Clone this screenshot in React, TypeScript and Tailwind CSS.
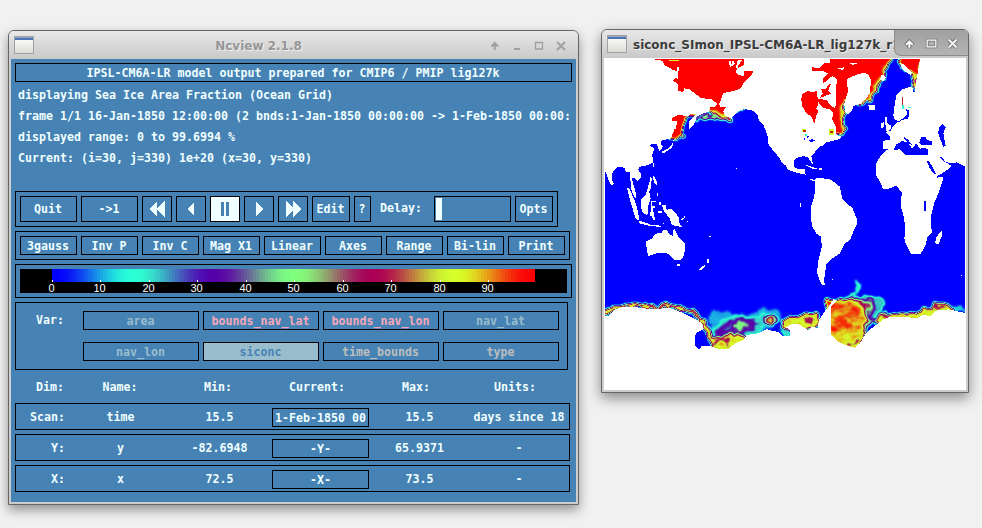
import React from "react";

const MONO =
  "font-['DejaVu_Sans_Mono','Liberation_Mono',monospace] font-bold text-[11.63px] whitespace-pre text-[#f0ffff]";

function Btn({ label, className = "" }: { label: React.ReactNode; className?: string }) {
  return (
    <div className={`flex shrink-0 items-center justify-center overflow-hidden border border-black leading-[17px] ${className}`}>
      {label}
    </div>
  );
}

function WindowIcon() {
  return (
    <div className="h-[18px] w-5 shrink-0 border border-[#a0a0a0] bg-linear-to-b from-white to-[#dcdcd6]">
      <div className="h-[3px] border-t border-[#9aa7bf] bg-[#4a76b8]" />
    </div>
  );
}

function Arrows({ d }: { d: string }) {
  return (
    <svg width="28" height="24" viewBox="0 0 28 24" shapeRendering="crispEdges">
      <path d={d} fill="currentColor" />
    </svg>
  );
}

const BANDS = Array.from({ length: 161 }, (_, i) => {
  const t = i / 160;
  const g = Math.round((255 * (1 - Math.cos(6 * Math.PI * t))) / 2);
  return `rgb(${Math.round(255 * t)},${g},${Math.round(255 * (1 - t))})`;
});

function ColorBar() {
  return (
    <svg width="547" height="24" viewBox="20 269 547 24" className="block bg-black" shapeRendering="crispEdges">
      {BANDS.map((c, i) => (
        <rect key={i} x={52 + i * 3} y="269" width="3" height="13" fill={c} />
      ))}
      {[52, 100, 149, 197, 246, 294, 343, 391, 440, 488].map((x, i) => (
        <g key={x} fill="white">
          <rect x={x} y="280" width="1" height="2" />
          <text x={x - 0.5} y="292" textAnchor="middle" className="font-['Liberation_Sans',Arial,sans-serif] text-[11px] font-normal">
            {i * 10}
          </text>
        </g>
      ))}
    </svg>
  );
}

function NcviewWindow() {
  return (
    <div className="absolute left-2 top-[30px] flex h-[475px] w-[571px] flex-col rounded-t-[6px] border border-[#666] bg-[#cdcdcd] px-[2px] pb-[2px] shadow-[0_5px_12px_rgba(0,0,0,0.4)]">
      <div className="-mx-[2px] flex h-7 shrink-0 items-center rounded-t-[5px] bg-linear-to-b from-[#e8e8e8] to-[#c9c9c9] pl-[5px] pr-[10px]">
        <WindowIcon />
        <div className="flex-1 pr-[3px] pt-px text-center font-['DejaVu_Sans',sans-serif] text-[12px] font-bold text-[#969696] [text-shadow:1px_1px_0_#eee]">
          Ncview 2.1.8
        </div>
        <svg width="82" height="20" viewBox="486 34 82 20" fill="none" stroke="#a0a0a0" strokeWidth="2">
          <path d="M494.800 49v-7M491.500 45.500l3.300-3.500 3.300 3.500" />
          <path d="M514 48h6" />
          <path d="M535.500 41.500h7v6.500h-7z" strokeWidth="1.300" />
          <path d="M557 41l8 8M565 41l-8 8" />
        </svg>
      </div>
      <div className={`flex flex-1 flex-col overflow-hidden bg-[#4682b4] pl-1 pt-1 ${MONO}`}>
        <Btn className="h-[19px] w-[557px] pr-px pt-[2px]" label="IPSL-CM6A-LR model output prepared for CMIP6 / PMIP lig127k" />
        <div className="mt-[3px] w-[557px] shrink-0 overflow-hidden pl-[3px] leading-[21px]">
          <div>displaying Sea Ice Area Fraction (Ocean Grid)</div>
          <div>frame 1/1 16-Jan-1850 12:00:00 (2 bnds:1-Jan-1850 00:00:00 -&gt; 1-Feb-1850 00:00:</div>
          <div>displayed range: 0 to 99.6994 %</div>
          <div>Current: (i=30, j=330) 1e+20 (x=30, y=330)</div>
        </div>
        <div className="mt-[22px] flex h-9 w-[543px] shrink-0 gap-1 border border-black p-1">
          <Btn className="w-[57px] pr-px" label="Quit" />
          <Btn className="w-[57px] pr-px" label="->1" />
          <Btn className="w-[30px]" label={<Arrows d="M6 12 14 4v7L22 4v16L14 13v7z" />} />
          <Btn className="w-[30px]" label={<Arrows d="M10 12 17 5v14z" />} />
          <Btn className="w-[30px] bg-[#f0ffff] text-[#4682b4]" label={<Arrows d="M10 5h3v14h-3zM15 5h3v14h-3z" />} />
          <Btn className="w-[30px]" label={<Arrows d="M18 12 11 5v14z" />} />
          <Btn className="w-[30px]" label={<Arrows d="M22 12 14 4v7L7 4v16L14 13v7z" />} />
          <Btn className="w-[38px] pr-px" label="Edit" />
          <Btn className="w-[17px] pr-px" label="?" />
          <div className="w-[55px] pr-[3px] text-center leading-6">Delay:</div>
          <div className="w-[77px] border border-black p-px">
            <div className="h-[22px] w-[6px] bg-[#f0ffff]" />
          </div>
          <Btn className="w-[38px] pr-px" label="Opts" />
        </div>
        <div className="mt-1 flex h-[29px] w-[555px] shrink-0 gap-1 border border-black p-1">
          {["3gauss", "Inv P", "Inv C", "Mag X1", "Linear", "Axes", "Range", "Bi-lin", "Print"].map((t) => (
            <Btn key={t} className="w-[57px] pr-px pt-[2px]" label={t} />
          ))}
        </div>
        <div className="mt-1 h-[34px] w-[557px] shrink-0 border border-black p-1">
          <ColorBar />
        </div>
        <div className="mt-1 flex h-[68px] w-[553px] shrink-0 border border-black pt-2">
          <div className="w-[67px] pl-[20px] pt-px leading-[17px]">Var:</div>
          <div className="grid h-[50px] grid-cols-[116px_116px_116px_116px] content-between gap-x-1">
            <Btn className="h-[19px] pr-px pt-[2px] text-[#9abdcd]" label="area" />
            <Btn className="h-[19px] pr-px pt-[2px] text-[#f7a8b8]" label="bounds_nav_lat" />
            <Btn className="h-[19px] pr-px pt-[2px] text-[#f7a8b8]" label="bounds_nav_lon" />
            <Btn className="h-[19px] pr-px pt-[2px] text-[#9abdcd]" label="nav_lat" />
            <Btn className="h-[19px] pr-px pt-[2px] text-[#9abdcd]" label="nav_lon" />
            <Btn className="h-[19px] bg-[#9abdcd] pr-px pt-[2px] text-[#4682b4]" label="siconc" />
            <Btn className="h-[19px] pr-px pt-[2px] text-[#bebebe]" label="time_bounds" />
            <Btn className="h-[19px] pr-px pt-[2px] text-[#bebebe]" label="type" />
          </div>
        </div>
        <div className="flex h-[33px] w-[557px] shrink-0 items-center pt-[2px] text-center">
          <div className="w-[70px]">Dim:</div>
          <div className="w-[70px]">Name:</div>
          <div className="w-[126px]">Min:</div>
          <div className="w-[72px]">Current:</div>
          <div className="w-[126px]">Max:</div>
          <div className="w-[72px]">Units:</div>
        </div>
        <div className="flex flex-col gap-1">
          {[
            ["Scan:", "time", "15.5", "1-Feb-1850 00", "15.5", "days since 18"],
            ["Y:", "y", "-82.6948", "-Y-", "65.9371", "-"],
            ["X:", "x", "72.5", "-X-", "73.5", "-"],
          ].map((r) => (
            <div key={r[0]} className="flex h-[27px] w-[555px] items-center border border-black text-center leading-[23px]">
              <div className="w-[49px] pt-[2px] text-right">{r[0]}</div>
              <div className="w-[111px] pt-[2px]">{r[1]}</div>
              <div className="w-[87px] pt-[2px]">{r[2]}</div>
              <Btn className="ml-[9px] mt-px h-[19px] w-[97px] pt-[2px]" label={r[3]} />
              <div className="w-[101px] pt-[2px]">{r[4]}</div>
              <div className="w-[98px] pt-[2px]">{r[5]}</div>
            </div>
          ))}
        </div>
      </div>
    </div>
  );
}

/* Ice concentration is painted in grey, softened, then run through the 3gauss colour map. */
function IceFilter({ id, k1, k2, blur }: { id: string; k1: number; k2: number; blur: number }) {
  return (
    <filter id={id} filterUnits="userSpaceOnUse" x="0" y="90" width="1150" height="1050" colorInterpolationFilters="sRGB">
      <feTurbulence type="fractalNoise" baseFrequency="0.045" numOctaves="3" seed="4" result="n" />
      <feDisplacementMap in="SourceGraphic" in2="n" scale="26" xChannelSelector="R" yChannelSelector="G" result="d" />
      <feGaussianBlur in="d" stdDeviation={blur} result="b" />
      <feTurbulence type="fractalNoise" baseFrequency="0.03 0.045" numOctaves="3" seed="9" />
      <feColorMatrix values="1 0 0 0 0  1 0 0 0 0  1 0 0 0 0  0 0 0 0 1" result="m" />
      <feComposite in="b" in2="m" operator="arithmetic" k1={k1} k2={k2} k3="0" k4="0" />
      <feColorMatrix values="1 0 0 0 0  0 1 0 0 0  0 0 1 0 0  0 0 0 0 1" />
      <feComponentTransfer>
        <feFuncR type="table" tableValues="0 1" />
        <feFuncG type="table" tableValues="0 .25 .75 1 .75 .25 0 .25 .75 1 .75 .25 0 .25 .75 1 .75 .25 0" />
        <feFuncB type="table" tableValues="1 0" />
      </feComponentTransfer>
    </filter>
  );
}

function SeaIceMap() {
  const grey = (t: number) => {
    const v = Math.round(t * 255);
    return `rgb(${v},${v},${v})`;
  };
  return (
    <svg width="360" height="331" viewBox="30 117 1080 993" className="block overflow-hidden" shapeRendering="crispEdges">
      <defs>
        <IceFilter id="north" k1={0} k2={1} blur={3.2} />
        <IceFilter id="south" k1={0.2} k2={0.9} blur={3.6} />
        <clipPath id="southHalf">
          <rect x="0" y="600" width="1150" height="540" />
        </clipPath>
      </defs>
      <g filter="url(#north)">
        <rect x="-40" y="40" width="1240" height="1140" fill="black" />
        {/* Arctic, Bering and Okhotsk */}
        <path fill="white" d="M150 60H500V250L400 280 370 282 340 275 300 284 278 290 266 310 262 355 238 360 215 352V280L240 250 150 200z" />
        <path fill="none" stroke={grey(0.5)} strokeWidth="9" d="M300 298 345 288 375 294 412 300" />
        <path fill="none" stroke={grey(0.85)} strokeWidth="12" d="M350 276 375 284 408 292" />
        {/* Baffin bay, Fram strait and Barents */}
        <path fill="white" d="M640 60H895L885 125 872 145 865 172 850 178 838 212 822 240 800 252 770 250 755 240 742 255 742 290 752 320 745 340 700 345 690 250 640 200z" />
        <path fill="none" stroke={grey(0.86)} strokeWidth="10" d="M740 255 742 295 748 325 740 345M880 130 868 150 862 175 846 190 836 215 818 245" />
        <path fill="white" d="M915 60H975V160L956 180 950 160 930 150 915 130z" />
        <path fill="none" stroke={grey(0.85)} strokeWidth="14" d="M962 155V212" />
      </g>
      <g clipPath="url(#southHalf)">
        <g filter="url(#south)">
          <rect x="-40" y="40" width="1240" height="1140" fill="black" />
          {/* Amundsen and Ross sector */}
          <path fill="none" stroke={grey(0.87)} strokeWidth="13" strokeLinejoin="round" d="M20 885 58 864 100 857 150 859 190 864 212 854 235 862 275 870 310 893 335 925 348 960 356 985" />
          <path fill={grey(0.1)} d="M335 885 370 872 430 882 480 876 510 862 550 872 564 900 530 920 480 952 360 968z" />
          <path fill={grey(0.2)} d="M350 935 390 896 430 884 475 896 510 880 520 905 485 945 430 948 360 960z" />
          <path fill={grey(0.34)} d="M362 936 400 902 440 892 490 908 475 930 430 945 370 950z" />
          <path fill={grey(0.22)} d="M385 930 415 908 440 900 425 925z" />
          <path fill={grey(0.5)} d="M412 925 430 902 462 912 435 930z" />
          <path fill={grey(0.84)} d="M340 955 430 943 455 950 450 1010H350z" />
          <path fill="none" stroke={grey(0.66)} strokeWidth="9" d="M352 968 400 958 395 980" />
          <ellipse cx="530" cy="899" rx="20" ry="18" fill={grey(0.45)} />
          <ellipse cx="530" cy="899" rx="11" ry="11" fill={grey(0.75)} />
          <path fill={grey(0.85)} d="M565 907 582 895 620 885 664 876 674 890 667 920 630 930 570 932z" />
          <path fill={grey(0.66)} d="M618 898 656 888 655 908 630 912z" />
          <path fill={grey(0.2)} d="M555 930 590 925 580 965 560 955z" />
          {/* Weddell sea */}
          <path fill="none" stroke={grey(0.22)} strokeWidth="8" d="M730 840 765 832 785 815 793 795 782 782" />
          <path fill={grey(0.22)} d="M760 830 800 828 850 834 870 842 860 865 840 890 828 915 812 905 790 850z" />
          <path fill={grey(0.4)} d="M775 836 810 834 838 844 834 868 822 892 810 880 795 848z" />
          <path fill={grey(0.68)} d="M762 838 800 840 826 850 820 876 806 872 790 852z" />
          <path fill={grey(0.86)} d="M690 838 780 842 806 860 816 882 820 920 805 955 785 1000 690 990z" />
          <path fill={grey(0.9)} d="M690 842 770 846 800 870 806 905 785 940 740 955 690 950z" />
          <path fill={grey(0.935)} d="M690 845 755 848 785 872 788 900 765 918 730 925 690 935z" />
          <path fill="none" stroke={grey(0.68)} strokeWidth="8" d="M755 972 770 975 795 958" />
          <path fill="none" stroke={grey(0.5)} strokeWidth="12" d="M812 930 822 905 838 898" />
          {/* East Antarctic fringe */}
          <path fill={grey(0.85)} d="M838 906 850 888 872 878 892 884 930 882 970 872 1010 864 1022 848 1050 850 1085 864 1080 880 1000 895 850 912z" />
          <path fill="none" stroke={grey(0.67)} strokeWidth="7" d="M852 892 882 882M1020 860 1060 862" />
          <path fill="none" stroke={grey(0.13)} strokeWidth="10" d="M1070 862 1120 876" />
        </g>
      </g>
      <g fill="white">
        {/* Asia with its Arctic, Okhotsk and Indian Ocean coasts */}
        <path d="M27 114H178L180 119 203 122 207 135 235 150 246 154 246 172 232 182 250 192 250 212 265 216 268 205 283 208 318 234 350 238 367 252 358 262 345 262 343 274 320 282 304 290 304 300 290 322 283 326 282 304 305 282 285 282 280 290 250 284 230 295 232 302 245 304 244 325 238 328 228 355 200 362 198 372 204 380 193 394 188 380 186 372 168 372 166 378 178 384 172 405 174 428 160 435 135 440 129 449 138 462 137 472 127 483 118 472 110 474 123 520 122 536 110 515 104 457 93 457 90 446 82 440 70 440 53 454 50 478 56 490 55 496 50 497 43 486 33 457 27 456z" />
        {/* Japan, Taiwan and the Philippines */}
        <path d="M236 360 232 382 220 390 203 402 202 394 218 386 230 375zM173 428h3v14h-3zM174 465 182 478 188 492 186 498 176 484zM165 470 172 475 165 500z" />
        {/* Indonesia and New Guinea */}
        <path d="M95 502 103 507 120 542 130 580 132 600 122 597 108 550zM130 602 150 607 170 615 185 615 200 618 198 621 165 618 135 611zM165 480 169 500 163 515 167 535 160 558 157 586 140 576 138 538 150 528 158 505zM168 542h14v4h-10v12h8v6h-7l7 36h-4l-6-12h-4zM192 545h5v9h-5zM189 574h13v4h-13zM201 556 212 554 215 570 229 566 242 578 252 594 252 608 262 623 250 619 230 615 224 595 206 573zM259 598l10-8v5l-9 8zM266 587h4v5h-4zM186 520h4v8h-4zM277 603h3v3h-3zM205 609h3v3h-3z" />
        {/* Australia, Tasmania and New Zealand */}
        <path d="M153 664 175 654 176 645 190 638 201 638 202 632 216 630 222 641 234 648 236 624 243 634 250 650 269 670 270 692 264 714 255 720H238L230 710 215 699H188L160 708 156 695zM246 732h9v6h-9zM336 717h6v12h-6zM312 748 320 740 333 733 330 740 318 752zM342 648h6v3h-6zM423 444h3v3h-3z" />
        {/* North and Central America */}
        <path d="M447 117 446 135 428 144 421 157 432 165 446 168 447 154 475 153 473 160 462 172 448 186 438 204 420 212 384 219 378 240 372 254 378 262 392 262 385 275 391 288 410 296 418 284 433 272 450 267 474 272 488 287 492 302 506 317 517 344 520 372 535 392 552 412 560 428 572 436 580 450 600 457 632 464 645 480 660 485 659 480 652 478 640 475 630 460V447L620 446 610 447 600 442 598 422 604 414 625 408 640 413 650 430 654 432 649 410 660 396 675 380 686 376 690 368 735 357 738 350 725 345 722 320 712 300 714 270 724 255 722 215 726 180 718 160 708 155V117z" />
        {/* South America */}
        <path d="M660 476 675 474 705 478 718 487 735 500 741 535 755 550 772 563 785 595V613L775 635 766 658 748 672 735 700 712 715 694 732 690 760 687 785 690 794H680L674 780 667 760 668 732 680 682 679 650 665 642 652 620 648 595V560L658 530 660 500z" />
        {/* Greenland, Iceland and Svalbard */}
        <path d="M755 178 775 168 788 163 810 158 820 165 828 178 825 218 815 235 795 252 775 258 772 270 760 284 750 275 748 250 759 215zM820 256h19v13h-16zM857 167l7-3 8 8-6 12-10-4zM915 130l10 2 25 25-4 8-22-15z" />
        {/* British isles */}
        <path d="M869 291 877 291 877 310 890 318 886 330 872 334 872 318zM858 310 868 305 867 322 857 324z" />
        {/* Caribbean and southern islets */}
        <path d="M630 434 650 440 668 446 660 449 635 438zM672 443h9v6h-9zM615 549h3v12h-3zM711 777h3v3h-3z" />
        {/* Europe, Africa and western Asia */}
        <path d="M975 117H1113V439L1095 433 1085 427 1066 430 1050 425 1040 410 1035 413 1049 425 1071 438 1050 455 1026 468 1027 473 1043 470 1043 482 1030 520 1017 550 1008 590 1010 638 997 652 990 680 976 702H948L930 665 928 655 931 640 928 598 918 560 920 518 905 498 896 500 880 507 864 508 855 485 842 465V432L858 405 873 390 895 390 925 387 928 400 940 406 950 402 962 406 998 406 998 390 990 384 974 386 964 370 958 378 952 386 935 368 922 366 905 372 895 390 865 387 864 362 884 360V350L870 335 885 334 895 318 905 308 924 302 918 306 900 300 895 285 898 262 904 225 918 210 940 202 952 200 955 215H961V200z" />
        <path d="M1030 644 1041 632 1040 650 1030 674 1021 670 1022 654z" />
        <path d="M1099 765h3v3h-3z" />
        {/* Antarctica */}
        <path d="M27 885 38 889 60 868 80 862 125 862 155 866 195 866 225 864 260 877 290 892 320 908 326 928 305 938 300 960 303 976 312 989 320 978 346 978 370 987H400L420 970 445 960 455 945 490 940 515 927 530 932 552 936 563 948H585L585 930 572 922 590 912 610 912 640 930 652 920 668 925 672 900 685 880 708 850 715 838 725 842 708 858V945L730 965 750 975 778 983 795 970 810 945 825 928 845 914 862 900 885 890 940 892 962 895 985 885 1005 888 1022 872 1060 868 1080 872 1113 880V1113H27z" />
      </g>
      <g fill="blue">
        {/* Inland and marginal seas */}
        <path d="M300 975 300 945 320 930 334 948 340 976 320 978 312 988z" />
        <path d="M973 368 978 352 990 350 996 360 1012 364 1010 374 980 376zM1031 325 1042 312 1052 322 1045 340 1052 378 1045 380 1035 355 1030 340zM994 420 1004 426 1024 462 1018 463 1004 444zM987 543h5v29h-5z" />
        <path d="M905 375 920 362 940 368 954 390 967 380 972 393 998 388V405H930z" />
        <path d="M926 350 940 360 950 374 944 372 930 360zM927 292 936 285 934 268 943 270 940 295 915 302zM597 427h4v14h-4z" />
        <path d="M626 348 634 344 638 354 645 347M640 362l12-5 8 5-10 4zM627 353h3v8h-3z" />
      </g>
      <g fill="red">
        {/* Hudson bay and the Canadian archipelago */}
        <path d="M619 238 622 222 638 213 655 216 665 212 665 228 671 238 670 255 664 266 670 275 663 286 660 308H656L650 290 635 280 622 260z" />
        <path d="M650 141 670 146 690 128H705V117H720V135L715 150 740 152 755 160 752 175H725L712 168 685 190 683 177 700 160 680 152 652 152zM677 205l14 4 12-18 4 2-7 18 8 10-13 5-20 8 8-14zM670 236l25 5 12 15 20 14-6 12-16-14-20-4-12-14z" />
      </g>
      <g fill="white">
        <path d="M403 122h5v14h-5zM412 122h4l3 10-5 6-8 2v-5l5-3zM425 125l8-6 8 3-10 12-3 10h-4z" />
        <path d="M247 140h6v14h-4v24h-4zM760 128l28 2-14 5zM728 146l20-4-5 8z" />
        <path d="M285 318h10l7-25-12 4z" />
      </g>
      <path fill="#d5ff2a" d="M620 326h14v10h-14zM702 328h14v18h-14zM222 119h30v3h-30z" />
      <path fill="#c02020" d="M625 330h9v5h-9zM706 332h8v8h-8zM920 232h5v22h-5z" />
      <path fill="#2affd5" d="M922 256h6v12h-6zM940 260h9v4h-9zM630 343h5v4h-5z" />
    </svg>
  );
}

function MapWindow() {
  return (
    <div className="absolute left-[601px] top-[29px] flex h-[364px] w-[368px] flex-col rounded-t-[6px] border border-[#666] bg-[#cdcdcd] px-[2px] pb-[2px] shadow-[0_5px_14px_rgba(0,0,0,0.45)]">
      <div className="-mx-[2px] flex h-7 shrink-0 overflow-hidden rounded-t-[5px] bg-linear-to-b from-[#e8e8e8] to-[#c9c9c9] pl-[5px]">
        <div className="flex flex-1 items-center overflow-hidden">
          <WindowIcon />
          <div className="ml-[6px] flex-1 overflow-hidden whitespace-nowrap pt-px font-['DejaVu_Sans',sans-serif] text-[12px] font-bold text-[#3c3c3c] [text-shadow:1px_1px_0_#eee]">
            siconc_SImon_IPSL-CM6A-LR_lig127k_r1
          </div>
        </div>
        <svg width="74" height="26" viewBox="894 30 74 26" className="shrink-0 rounded-bl-[7px] border-b border-l border-[#8c8c8c] bg-linear-to-b from-[#a0a0a0] to-[#b4b4b4]" fill="none">
          <g stroke="#777" strokeWidth="4">
            <path d="M908 49v-6M904 46l4-4 4 4M949 40l8 8M957 40l-8 8" />
            <path d="M926.500 40.500h9v7h-9z" strokeWidth="3" />
          </g>
          <g stroke="white" strokeWidth="2">
            <path d="M908 48.500v-6M904.500 45.500l3.500-3.500 3.500 3.500M949 40l8 8M957 40l-8 8" />
            <path d="M926.500 40.500h9v7h-9z" strokeWidth="1.300" />
            <path d="M929 43h4v2h-4z" stroke="none" fill="#b4b4b4" />
          </g>
        </svg>
      </div>
      <div className="flex-1 overflow-hidden bg-white px-px pt-px">
        <SeaIceMap />
      </div>
    </div>
  );
}

export default function App() {
  return (
    <main className="relative h-[528px] w-[982px] overflow-hidden bg-[#f1f1f1]">
      <NcviewWindow />
      <MapWindow />
    </main>
  );
}
